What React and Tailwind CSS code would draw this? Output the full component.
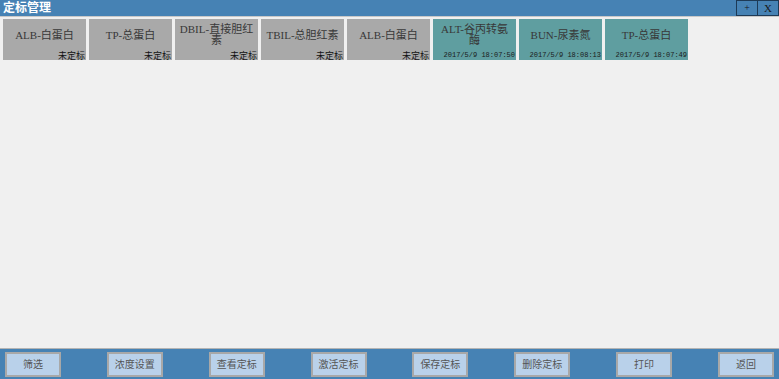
import React from 'react';

const tiles = [
  { lines: ['ALB-白蛋白'], status: '未定标', done: false },
  { lines: ['TP-总蛋白'], status: '未定标', done: false },
  { lines: ['DBIL-直接胆红', '素'], status: '未定标', done: false },
  { lines: ['TBIL-总胆红素'], status: '未定标', done: false },
  { lines: ['ALB-白蛋白'], status: '未定标', done: false },
  { lines: ['ALT-谷丙转氨', '酶'], status: '2017/5/9 18:07:50', done: true },
  { lines: ['BUN-尿素氮'], status: '2017/5/9 18:08:13', done: true },
  { lines: ['TP-总蛋白'], status: '2017/5/9 18:07:49', done: true },
];

const actions = ['筛选', '浓度设置', '查看定标', '激活定标', '保存定标', '删除定标', '打印', '返回'];

const serif = { fontFamily: '"Liberation Serif", "Noto Sans CJK SC", serif' };

const Tile = ({ tile }) => (
  <div
    className={`w-[83px] h-[41px] flex flex-col text-[#383838] ${tile.done ? 'bg-[#5f9ea0]' : 'bg-[#a9a9a9]'}`}
  >
    <div className="h-[31px] flex flex-col items-center justify-center pt-[1px] text-[11px]" style={serif}>
      {tile.lines.map((l, i) => (
        <div key={i} className="h-[11px] flex items-center whitespace-nowrap">{l}</div>
      ))}
    </div>
    <div className="h-[10px] flex items-center justify-end pr-[1px]">
      {tile.done ? (
        <span className="text-[7px] leading-none text-[#1a1a1a] font-['Liberation_Mono',monospace] whitespace-nowrap">
          {tile.status}
        </span>
      ) : (
        <span className="text-[9px] leading-none text-[#111] font-['Noto_Sans_CJK_SC',sans-serif]">
          {tile.status}
        </span>
      )}
    </div>
  </div>
);

export default function App() {
  return (
    <div className="w-[779px] h-[379px] flex flex-col bg-[#f0f0f0] overflow-hidden">
      {/* title bar */}
      <div className="h-[16px] flex items-stretch bg-[#4682b4] border-b border-[#c8c8c8] box-content">
        <div
          className="flex-1 flex items-center pl-[3px] text-white text-[12px] font-bold leading-none"
          style={serif}
        >
          定标管理
        </div>
        <button className="w-[22px] border border-[#1d3a56] text-[10px] text-[#1a1a1a] flex items-center justify-center leading-none" style={serif}>
          +
        </button>
        <button className="w-[21px] border border-l-0 border-[#1d3a56] text-[11px] text-[#1a1a1a] flex items-center justify-center leading-none" style={serif}>
          X
        </button>
      </div>

      {/* tile area */}
      <div className="flex-1 flex items-start gap-[3px] pl-[3px] pt-[2px]">
        {tiles.map((t, i) => (
          <Tile key={i} tile={t} />
        ))}
      </div>

      {/* bottom toolbar */}
      <div className="h-[31px] border-t border-[#b4b4b4] bg-[#4682b4] flex items-center justify-between px-[5px]">
        {actions.map((a) => (
          <button
            key={a}
            className="w-[56px] h-[25px] bg-[#b9d1ea] border-2 border-[#a8a8a8] text-[10px] text-[#555] font-['Noto_Sans_CJK_SC',sans-serif] flex items-center justify-center leading-none"
          >
            {a}
          </button>
        ))}
      </div>
    </div>
  );
}
